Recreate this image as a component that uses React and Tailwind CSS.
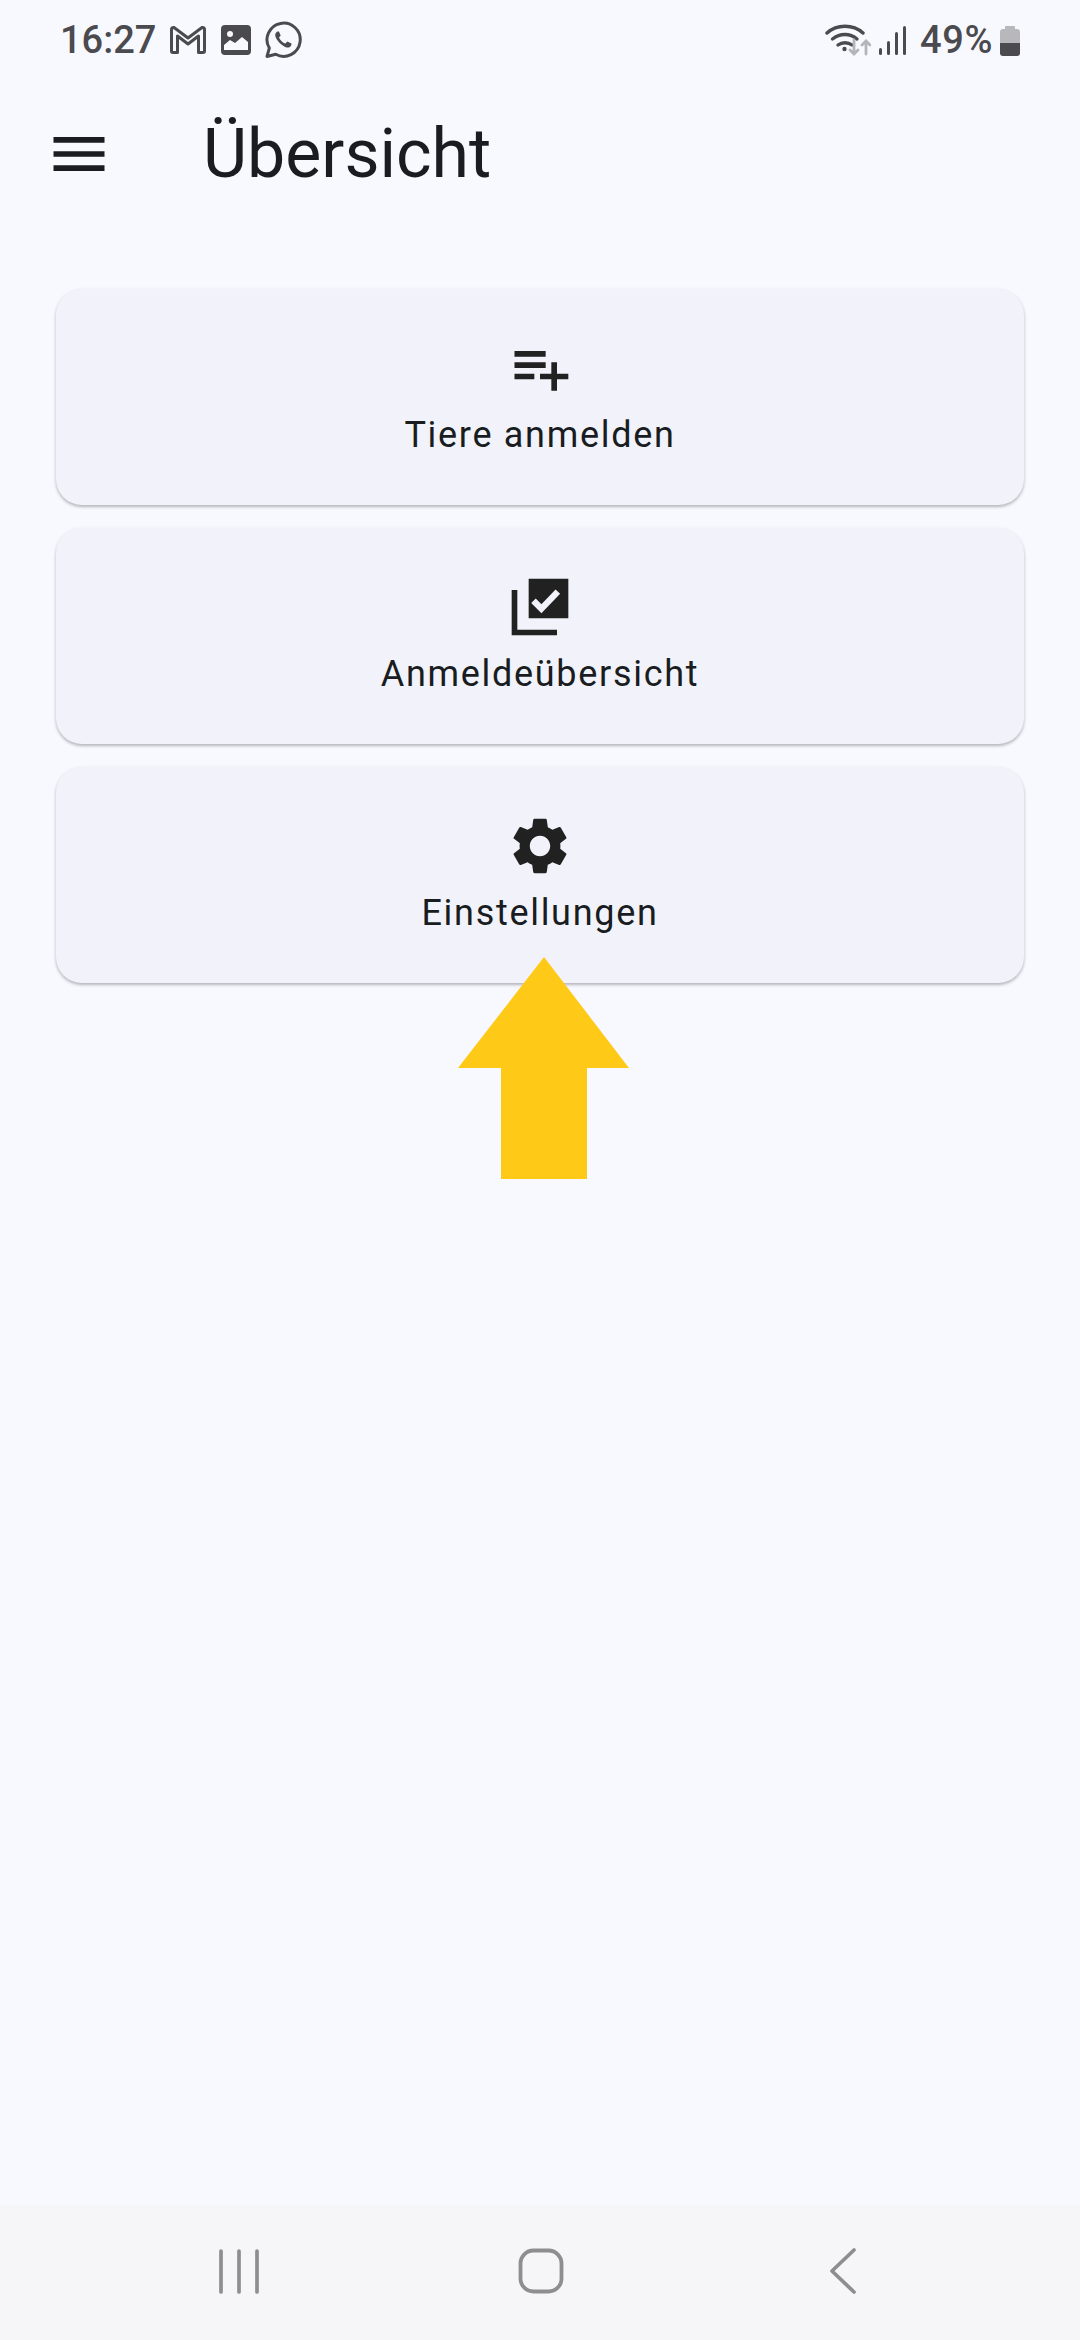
import React from 'react';

const cards = [
  {
    label: 'Tiere anmelden',
    icon: <path d="M14 10H3v2h11v-2zm0-4H3v2h11V6zm4 8v-4h-2v4h-4v2h4v4h2v-4h4v-2h-4zM3 16h7v-2H3v2z" />,
  },
  {
    label: 'Anmeldeübersicht',
    icon: (
      <path
        fillRule="evenodd"
        d="M4 6H2v16h16v-2H4V6zM22 2H8v14h14V2zM12.5 14.200 8.900 10.600l1.600-1.600 2 2 5-5.200 1.600 1.500z"
      />
    ),
  },
  {
    label: 'Einstellungen',
    icon: (
      <path d="M19.14,12.94c0.04-0.3,0.06-0.61,0.06-0.94c0-0.32-0.02-0.64-0.07-0.94l2.03-1.58c0.18-0.14,0.23-0.41,0.12-0.61 l-1.92-3.32c-0.12-0.22-0.37-0.29-0.59-0.22l-2.39,0.96c-0.5-0.38-1.03-0.7-1.62-0.94L14.4,2.81c-0.04-0.24-0.24-0.41-0.48-0.41 h-3.84c-0.24,0-0.43,0.17-0.47,0.41L9.25,5.35C8.66,5.59,8.12,5.92,7.63,6.29L5.24,5.33c-0.22-0.08-0.47,0-0.59,0.22L2.74,8.87 C2.62,9.08,2.66,9.34,2.86,9.48l2.03,1.58C4.84,11.36,4.8,11.69,4.8,12s0.02,0.64,0.07,0.94l-2.03,1.58 c-0.18,0.14-0.23,0.41-0.12,0.61l1.92,3.32c0.12,0.22,0.37,0.29,0.59,0.22l2.39-0.96c0.5,0.38,1.03,0.7,1.62,0.94l0.36,2.54 c0.05,0.24,0.24,0.41,0.48,0.41h3.84c0.24,0,0.44-0.17,0.47-0.41l0.36-2.54c0.59-0.24,1.13-0.56,1.62-0.94l2.39,0.96 c0.22,0.08,0.47,0,0.59-0.22l1.92-3.32c0.12-0.22,0.07-0.47-0.12-0.61L19.14,12.94z M12,15.6c-1.98,0-3.6-1.62-3.6-3.6 s1.62-3.6,3.6-3.6s3.6,1.62,3.6,3.6S13.98,15.6,12,15.6z" />
    ),
  },
];

const StatusLeft = () => (
  <div className="flex items-center">
    <span className="text-[38px] leading-[44px] font-medium text-[#4a4a4f]">16:27</span>
    {/* Gmail */}
    <svg viewBox="0 0 36 28" className="w-[36px] h-[28px] ml-[14px]" fill="none" stroke="#4a4a4f" strokeWidth="3" strokeLinejoin="round">
      <path d="M1.5 3.5q0-2 2-2h.5L18 12 32 1.500h.5q2 0 2 2V25q0 1.500-1.500 1.500h-4.500V10L18 18 7.500 10v16.500H3Q1.500 26.500 1.500 25z" />
    </svg>
    {/* Galerie */}
    <svg viewBox="0 0 32 32" className="w-[32px] h-[32px] ml-[14px]">
      <rect x="1" y="1" width="30" height="30" rx="4" fill="#4a4a4f" />
      <circle cx="10" cy="10" r="3" fill="#f8f9ff" />
      <path d="M4 26v-5l6-5 5 3 7-6 6 5v8z" fill="#f8f9ff" />
    </svg>
    {/* WhatsApp */}
    <svg viewBox="0 0 38 38" className="w-[38px] h-[38px] ml-[12px]" fill="none" stroke="#4a4a4f" strokeWidth="3">
      <path d="M3 35.5l2.3-8.4A16.6 16.6 0 1 1 11.7 33.3z" strokeLinejoin="round" />
      <path
        d="M13.5 10.5c-1.5.6-2.6 2.4-2.2 4.600.8 4 6.500 10 11.200 11.400 2.300.500 4-.6 4.800-2.300l.2-1.600-4.200-2.100-1.900 2.100c-2.800-1-5.200-3.400-6.400-6.200l1.700-2-1.800-4z"
        fill="#4a4a4f"
        stroke="none"
      />
    </svg>
  </div>
);

const StatusRight = () => (
  <div className="flex items-center">
    {/* WLAN mit Pfeilen */}
    <svg viewBox="0 0 46 34" className="w-[46px] h-[34px]" fill="none" strokeLinecap="round">
      <path d="M2 10C12 1 28 1 38 10" stroke="#4a4a4f" strokeWidth="3.4" />
      <path d="M7.5 16C15 10 25 10 32 16" stroke="#4a4a4f" strokeWidth="3.4" />
      <path d="M13 22c4-3 10-3 14 0" stroke="#4a4a4f" strokeWidth="3.4" />
      <circle cx="19.5" cy="26" r="2.2" fill="#4a4a4f" />
      <path d="M29 17v14M25 27l4 4 4-4" stroke="#b5b5b9" strokeWidth="2.8" />
      <path d="M41 31V18M37 22l4-4 4 4" stroke="#b5b5b9" strokeWidth="2.8" />
    </svg>
    {/* Signal */}
    <div className="flex items-end gap-[4.6px] h-[30px] ml-[8px]">
      <span className="w-[3.4px] h-[7px] rounded-full bg-[#4a4a4f]" />
      <span className="w-[3.4px] h-[14px] rounded-full bg-[#4a4a4f]" />
      <span className="w-[3.4px] h-[23px] rounded-full bg-[#4a4a4f]" />
      <span className="w-[3.4px] h-[29px] rounded-full bg-[#4a4a4f]" />
    </div>
    <span className="text-[38px] leading-[44px] font-medium tracking-[0.6px] text-[#4a4a4f] ml-[14px]">49%</span>
    {/* Akku */}
    <svg viewBox="0 0 22 31" className="w-[22px] h-[31px] ml-[6px]">
      <path d="M6 4V2a1 1 0 0 1 1-1h8a1 1 0 0 1 1 1v2h2a3 3 0 0 1 3 3v11H1V7a3 3 0 0 1 3-3z" fill="#b8b8bc" />
      <path d="M1 18h20v10a3 3 0 0 1-3 3H4a3 3 0 0 1-3-3z" fill="#4a4a4f" />
    </svg>
  </div>
);

const App = () => {
  return (
    <div className="relative h-[2340px] w-[1080px] overflow-hidden flex flex-col bg-[#f8f9ff] font-['Roboto',sans-serif] text-[#191c20]">
      {/* Statusleiste */}
      <div className="h-[80px] pl-[60px] pr-[59px] flex items-center justify-between shrink-0">
        <StatusLeft />
        <StatusRight />
      </div>

      {/* App-Leiste */}
      <div className="h-[148px] pl-[45px] flex items-center shrink-0">
        <svg viewBox="0 0 24 24" className="w-[68px] h-[68px] shrink-0" fill="#191c20">
          <path d="M3 18h18v-2H3v2zm0-5h18v-2H3v2zm0-7v2h18V6H3z" />
        </svg>
        <h1 className="ml-[90px] text-[68px] leading-[80px] font-normal">Übersicht</h1>
      </div>

      {/* Karten */}
      <div className="mt-[61px] px-[56px] flex flex-col gap-[23px]">
        {cards.map((card) => (
          <div
            key={card.label}
            className="h-[216px] pt-[45px] flex flex-col items-center rounded-[26px] bg-[#f2f3fa] shadow-[0_2px_3px_rgba(0,0,0,0.24),0_1px_5px_rgba(0,0,0,0.05)]"
          >
            <svg viewBox="0 0 24 24" className="w-[68px] h-[68px]" fill="#212121">
              {card.icon}
            </svg>
            <span className="mt-[9px] text-[36px] leading-[48px] tracking-[1.7px]">{card.label}</span>
          </div>
        ))}
      </div>

      <div className="flex-1" />

      {/* Navigationsleiste */}
      <div className="h-[135px] pl-[88px] bg-[#f6f6f8] flex items-center shrink-0">
        <div className="w-[302px] flex justify-center">
          <svg viewBox="0 0 42 46" className="w-[42px] h-[46px] mt-[-4px]" fill="none" stroke="#8e8e8e" strokeLinecap="round">
            <path d="M3 3v41M21 3v41M39 3v41" strokeWidth="3.7" />
          </svg>
        </div>
        <div className="w-[302px] flex justify-center">
          <svg viewBox="0 0 46 46" className="w-[46px] h-[46px] mt-[-4px]" fill="none" stroke="#8e8e8e">
            <rect x="2.5" y="2.500" width="41" height="41" rx="13" strokeWidth="3.800" />
          </svg>
        </div>
        <div className="w-[302px] flex justify-center">
          <svg viewBox="0 0 28 48" className="w-[28px] h-[48px] mt-[-4px]" fill="none" stroke="#8e8e8e" strokeLinecap="round" strokeLinejoin="round">
            <path d="M25 3L3 24l22 21" strokeWidth="3.7" />
          </svg>
        </div>
      </div>

      {/* Gelber Pfeil */}
      <svg viewBox="0 0 171 222" className="absolute left-[458px] top-[957px] w-[171px] h-[222px]" fill="#ffc917">
        <path d="M86 0l85 111h-42v111H43V111H0z" />
      </svg>
    </div>
  );
};

export default App;
